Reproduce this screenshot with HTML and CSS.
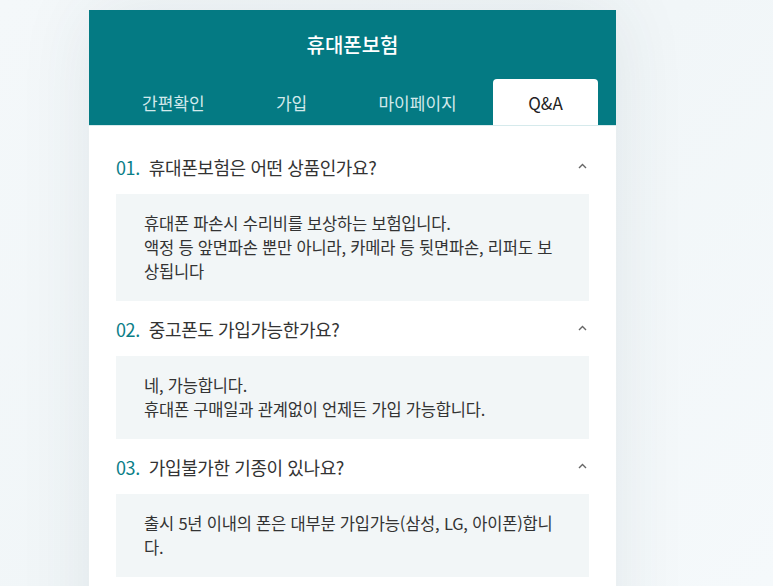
FILE: index.html
```html
<!DOCTYPE html>
<html lang="ko">
<head>
<meta charset="utf-8">
<title>휴대폰보험</title>
<link rel="stylesheet" href="styles.css">
</head>
<body>
<div class="page">
  <div class="card">
    <header class="header">
      <h1 class="title">휴대폰보험</h1>
      <nav class="tabs">
        <a class="tab">간편확인</a>
        <a class="tab">가입</a>
        <a class="tab">마이페이지</a>
        <a class="tab active">Q&amp;A</a>
      </nav>
    </header>
    <div class="faq">
      <div class="item">
        <div class="q"><span class="num">01.</span><span class="qtext">휴대폰보험은 어떤 상품인가요?</span><svg class="chev" width="9" height="6" viewBox="0 0 9 6"><path d="M1 5 L4.5 1.5 L8 5" fill="none" stroke="#666" stroke-width="1.4"/></svg></div>
        <div class="a">휴대폰 파손시 수리비를 보상하는 보험입니다.<br>액정 등 앞면파손 뿐만 아니라, 카메라 등 뒷면파손, 리퍼도 보상됩니다</div>
      </div>
      <div class="item">
        <div class="q"><span class="num">02.</span><span class="qtext">중고폰도 가입가능한가요?</span><svg class="chev" width="9" height="6" viewBox="0 0 9 6"><path d="M1 5 L4.5 1.5 L8 5" fill="none" stroke="#666" stroke-width="1.4"/></svg></div>
        <div class="a">네, 가능합니다.<br>휴대폰 구매일과 관계없이 언제든 가입 가능합니다.</div>
      </div>
      <div class="item">
        <div class="q"><span class="num">03.</span><span class="qtext">가입불가한 기종이 있나요?</span><svg class="chev" width="9" height="6" viewBox="0 0 9 6"><path d="M1 5 L4.5 1.5 L8 5" fill="none" stroke="#666" stroke-width="1.4"/></svg></div>
        <div class="a">출시 5년 이내의 폰은 대부분 가입가능(삼성, LG, 아이폰)합니다.</div>
      </div>
    </div>
  </div>
</div>
</body>
</html>
```
FILE: styles.css
```css
html, body {
  margin: 0;
  padding: 0;
  height: 100%;
  overflow: hidden;
}
body {
  background: linear-gradient(135deg, #f4f8fa 0%, #f1f6f8 50%, #f5f9fb 100%);
  font-family: "Noto Sans CJK KR", "Noto Sans", sans-serif;
}
.page {
  padding: 10px 0 0 89px;
}
.card {
  width: 527px;
  min-height: 700px;
  background: #fff;
  box-shadow: 0 0 70px rgba(40, 70, 80, 0.09);
}
.header {
  background: #047a83;
  border-bottom: 1px solid #d6eaec;
  padding: 0 18px;
}
.title {
  margin: 0;
  height: 69px;
  line-height: 69px;
  text-align: center;
  color: #fff;
  font-size: 20px;
  font-weight: 500;
}
.tabs {
  display: flex;
  justify-content: space-between;
  height: 46px;
}
.tab {
  display: flex;
  align-items: center;
  justify-content: center;
  padding: 0 35px;
  font-size: 17px;
  color: #d3e9eb;
  border-radius: 4px 4px 0 0;
}
.tab.active {
  background: #fff;
  color: #222;
  width: 105px;
  padding: 0;
}
.faq {
  padding: 13px 27px 0;
}
.q {
  display: flex;
  align-items: center;
  height: 55px;
  font-size: 18px;
  letter-spacing: -0.4px;
  color: #333;
}
.num {
  color: #0a7e87;
  margin-right: 9px;
}
.qtext {
  flex: 1;
}
.chev {
  margin-right: 2px;
  margin-top: -2px;
}
.a {
  background: #f2f6f7;
  padding: 17px 28px 18px;
  font-size: 16.5px;
  line-height: 24px;
  letter-spacing: -0.2px;
  color: #333;
}
```
